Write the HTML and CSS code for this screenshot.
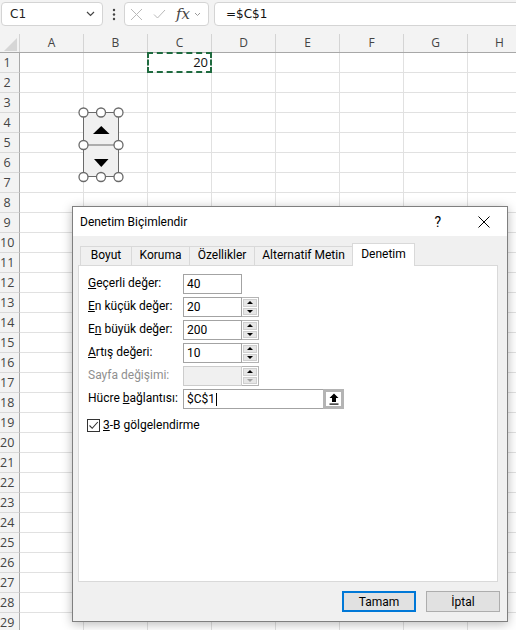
FILE: index.html
```html
<!DOCTYPE html>
<html lang="tr">
<head>
<meta charset="utf-8">
<title>Denetim Biçimlendir</title>
<link rel="stylesheet" href="styles.css">
</head>
<body>
<div class="app">
  <div class="fbar">
    <div class="namebox"><span>C1</span><svg width="9" height="6" viewBox="0 0 9 6"><path d="M1 1l3.5 3.5L8 1" fill="none" stroke="#444" stroke-width="1.2"/></svg></div>
    <div class="dots"><svg width="4" height="13" viewBox="0 0 4 13"><circle cx="2" cy="2" r="1.2" fill="#444"/><circle cx="2" cy="6.5" r="1.2" fill="#444"/><circle cx="2" cy="11" r="1.2" fill="#444"/></svg></div>
    <div class="fxbox">
      <svg width="13" height="13" viewBox="0 0 13 13"><path d="M1 1L12 12M12 1L1 12" stroke="#b9b9b9" stroke-width="1" fill="none"/></svg>
      <svg width="13" height="10" viewBox="0 0 13 10"><path d="M1 5.5L4.5 9L12 1" stroke="#b9b9b9" stroke-width="1" fill="none"/></svg>
      <span class="fx">fx</span>
      <svg width="7" height="5" viewBox="0 0 7 5"><path d="M1 1l2.5 2.5L6 1" fill="none" stroke="#9a9a9a" stroke-width="1"/></svg>
    </div>
    <div class="formula">=$C$1</div>
  </div>

  <div class="sheet">
    <div class="hdr">
      <div class="corner"><svg width="19" height="18" viewBox="0 0 19 18"><path d="M4 17H17V4Z" fill="#d6d6d6"/></svg></div>
      <div class="ch">A</div><div class="ch">B</div><div class="ch">C</div><div class="ch">D</div><div class="ch">E</div><div class="ch">F</div><div class="ch">G</div><div class="ch">H</div>
    </div>
    <div class="row"><div class="rh">1</div><div class="cell"></div><div class="cell"></div><div class="cell sel">20</div><div class="cell"></div><div class="cell"></div><div class="cell"></div><div class="cell"></div><div class="cell"></div></div>
    <div class="row"><div class="rh">2</div><div class="cells"></div></div>
    <div class="row"><div class="rh">3</div><div class="cells"></div></div>
    <div class="row"><div class="rh">4</div><div class="cells"></div></div>
    <div class="row"><div class="rh">5</div><div class="cells"></div></div>
    <div class="row"><div class="rh">6</div><div class="cells"></div></div>
    <div class="row"><div class="rh">7</div><div class="cells"></div></div>
    <div class="row"><div class="rh">8</div><div class="cells"></div></div>
    <div class="row"><div class="rh">9</div><div class="cells"></div></div>
    <div class="row"><div class="rh">10</div><div class="cells"></div></div>
    <div class="row"><div class="rh">11</div><div class="cells"></div></div>
    <div class="row"><div class="rh">12</div><div class="cells"></div></div>
    <div class="row"><div class="rh">13</div><div class="cells"></div></div>
    <div class="row"><div class="rh">14</div><div class="cells"></div></div>
    <div class="row"><div class="rh">15</div><div class="cells"></div></div>
    <div class="row"><div class="rh">16</div><div class="cells"></div></div>
    <div class="row"><div class="rh">17</div><div class="cells"></div></div>
    <div class="row"><div class="rh">18</div><div class="cells"></div></div>
    <div class="row"><div class="rh">19</div><div class="cells"></div></div>
    <div class="row"><div class="rh">20</div><div class="cells"></div></div>
    <div class="row"><div class="rh">21</div><div class="cells"></div></div>
    <div class="row"><div class="rh">22</div><div class="cells"></div></div>
    <div class="row"><div class="rh">23</div><div class="cells"></div></div>
    <div class="row"><div class="rh">24</div><div class="cells"></div></div>
    <div class="row"><div class="rh">25</div><div class="cells"></div></div>
    <div class="row"><div class="rh">26</div><div class="cells"></div></div>
    <div class="row"><div class="rh">27</div><div class="cells"></div></div>
    <div class="row"><div class="rh">28</div><div class="cells"></div></div>
    <div class="row"><div class="rh">29</div><div class="cells"></div></div>
  </div>

  <svg class="spinner" width="50" height="80" viewBox="0 0 50 80">
    <rect x="7.5" y="7.5" width="35" height="64" fill="#f0f0f0" stroke="#6a6a6a" stroke-width="1"/>
    <line x1="7.5" y1="40" x2="42.5" y2="40" stroke="#6a6a6a" stroke-width="1"/>
    <path d="M17 29H33.5L25.25 21Z" fill="#000"/>
    <path d="M18 54H32.5L25.25 62Z" fill="#000"/>
    <g fill="#fff" stroke="#6a6a6a" stroke-width="1.3">
      <circle cx="7.5" cy="7.5" r="4.5"/><circle cx="25" cy="7.5" r="4.5"/><circle cx="42.5" cy="7.5" r="4.5"/>
      <circle cx="7.5" cy="40" r="4.5"/><circle cx="42.5" cy="40" r="4.5"/>
      <circle cx="7.5" cy="72" r="4.5"/><circle cx="25" cy="72" r="4.5"/><circle cx="42.5" cy="72" r="4.5"/>
    </g>
  </svg>

  <div class="dialog">
    <div class="titlebar">
      <span class="title">Denetim Biçimlendir</span>
      <span class="help">?</span>
      <svg class="close" width="12" height="12" viewBox="0 0 12 12"><path d="M0.5 0.5L11.5 11.5M11.5 0.5L0.5 11.5" stroke="#000" stroke-width="1" fill="none"/></svg>
    </div>
    <div class="dbody">
      <div class="tabs">
        <div class="tab">Boyut</div>
        <div class="tab">Koruma</div>
        <div class="tab">Özellikler</div>
        <div class="tab">Alternatif Metin</div>
        <div class="tab active">Denetim</div>
      </div>
      <div class="panel">
        <div class="frow">
          <label class="lbl"><u>G</u>eçerli değer:</label>
          <div class="inp">40</div>
        </div>
        <div class="frow">
          <label class="lbl"><u>E</u>n küçük değer:</label>
          <div class="inp">20</div>
          <div class="spin"><div class="sb"><i class="up"></i></div><div class="sb"><i class="dn"></i></div></div>
        </div>
        <div class="frow">
          <label class="lbl">E<u>n</u> büyük değer:</label>
          <div class="inp">200</div>
          <div class="spin"><div class="sb"><i class="up"></i></div><div class="sb"><i class="dn"></i></div></div>
        </div>
        <div class="frow">
          <label class="lbl"><u>A</u>rtış değeri:</label>
          <div class="inp">10</div>
          <div class="spin"><div class="sb"><i class="up"></i></div><div class="sb"><i class="dn"></i></div></div>
        </div>
        <div class="frow">
          <label class="lbl dis">Sayfa değişimi:</label>
          <div class="inp disinp"></div>
          <div class="spin"><div class="sb"><i class="up"></i></div><div class="sb"><i class="dn disarr"></i></div></div>
        </div>
        <div class="frow">
          <label class="lbl">Hücre <u>b</u>ağlantısı:</label>
          <div class="inp wide"><span>$C$1</span><span class="caret"></span><span class="grow"></span>
            <span class="refbtn"><svg width="10" height="12" viewBox="0 0 10 12"><path d="M5 0.5L0.5 5H3V9H7V5H9.5Z" fill="#000"/><rect x="0.5" y="10.5" width="9" height="1.2" fill="#000"/></svg></span>
          </div>
        </div>
        <div class="chkrow">
          <span class="chk"><svg width="11" height="11" viewBox="0 0 11 11"><path d="M1.5 5.5L4.2 8.3L9.8 2" stroke="#333" stroke-width="1.1" fill="none"/></svg></span>
          <span><u>3</u>-B gölgelendirme</span>
        </div>
      </div>
      <div class="footer">
        <button class="btn primary">Tamam</button>
        <button class="btn">İptal</button>
      </div>
    </div>
  </div>
</div>
</body>
</html>
```
FILE: styles.css
```css
* { box-sizing: border-box; margin: 0; padding: 0; }
body { margin: 0; width: 516px; height: 630px; overflow: hidden; background: #fff; }
.app { position: relative; width: 516px; height: 630px; overflow: hidden; background: #f3f3f3; }

/* formula bar */
.fbar { display: flex; align-items: center; height: 28px; padding: 2px 0 2px 1px; font-family: "DejaVu Sans", sans-serif; font-size: 12px; color: #222; }
.namebox { width: 102px; height: 24px; background: #fff; border: 1px solid #d4d4d4; border-radius: 4px; display: flex; align-items: center; justify-content: space-between; padding: 0 7px 0 8px; }
.dots { width: 21px; display: flex; justify-content: center; }
.fxbox { width: 85px; height: 24px; background: #fff; border: 1px solid #d4d4d4; border-radius: 4px; display: flex; align-items: center; padding: 0 5px 0 5px; gap: 9px; }
.fxbox svg:nth-child(2) { margin-left: 1px; }
.fx { font-family: "DejaVu Serif", serif; font-style: italic; font-size: 15px; color: #444; margin-left: 1px; margin-right: -5px; }
.formula { flex: 1; height: 24px; margin-left: 5px; margin-right: -10px; background: #fff; border: 1px solid #d4d4d4; border-radius: 4px; display: flex; align-items: center; padding-left: 11px; color: #111; }

/* sheet */
.sheet { padding-top: 6px; font-family: "Open Sans", sans-serif; }
.hdr { display: flex; height: 18px; border-bottom: 1px solid #a8a8a8; box-sizing: content-box; }
.corner { width: 20px; flex: none; height: 18px; border-right: 1px solid #d4d4d4; }
.corner svg { display: block; }
.ch { width: 64px; flex: none; height: 18px; border-right: 1px solid #d4d4d4; text-align: center; font-size: 12px; line-height: 18px; color: #444; }
.row { display: flex; height: 20px; }
.rh { width: 20px; flex: none; border-right: 1px solid #a8a8a8; border-bottom: 1px solid #d9d9d9; font-size: 12.5px; line-height: 19px; color: #444; text-align: center; padding-right: 5px; white-space: nowrap; }
.cell { width: 64px; flex: none; background: #fff; border-right: 1px solid #e1e1e1; border-bottom: 1px solid #e1e1e1; }
.cells { flex: 1; background: repeating-linear-gradient(to right, #fff 0 63px, #e1e1e1 63px 64px); border-bottom: 1px solid #e1e1e1; }
.sel { position: relative; text-align: right; padding-right: 3px; font-size: 13px; line-height: 19px; color: #111; }
.sel::after { content: ""; position: absolute; top: -1px; left: -1px; right: -1px; bottom: -1px; border: 2px dashed #1f6b3f; }

/* floating spin control */
.spinner { position: absolute; left: 76px; top: 105px; }

/* dialog */
.dialog { position: absolute; left: 72px; top: 206px; width: 436px; height: 416px; background: #f0f0f0; border: 1px solid #7f7f7f; box-shadow: 0 2px 10px rgba(0,0,0,0.28); font-family: Roboto, "Liberation Sans", sans-serif; font-size: 12px; color: #000; display: flex; flex-direction: column; }
.titlebar { height: 29px; background: #fff; display: flex; align-items: center; padding: 0 17px 0 7px; }
.title { flex: 1; font-size: 12px; }
.help { font-size: 14px; margin-right: 37px; }
.close { display: block; }
.dbody { flex: 1; padding: 7px 9px 0 5px; display: flex; flex-direction: column; }
.tabs { display: flex; align-items: flex-end; height: 22px; padding-left: 2px; }
.tab { height: 19px; line-height: 17px; border: 1px solid #d9d9d9; border-bottom: none; margin-right: -1px; text-align: center; background: #f0f0f0; }
.tab:nth-child(1) { width: 52px; }
.tab:nth-child(2) { width: 59px; }
.tab:nth-child(3) { width: 66px; }
.tab:nth-child(4) { width: 99px; }
.tab.active { width: 63px; height: 23px; margin-bottom: -1px; background: #fff; position: relative; z-index: 1; line-height: 20px; }
.panel { height: 317px; background: #fff; border: 1px solid #d9d9d9; padding: 8px 9px 0 9px; }
.frow { display: flex; align-items: center; height: 20px; margin-bottom: 3px; }
.lbl { width: 95px; flex: none; padding-bottom: 3px; white-space: nowrap; }
.lbl.dis { color: #8f8f8f; }
.inp { width: 59px; height: 20px; border: 1px solid #a3a3a3; background: #fff; padding-left: 3px; line-height: 18px; display: flex; align-items: center; }
.disinp { background: #f0f0f0; border-color: #cccccc; }
.spin { width: 17px; height: 20px; border: 1px solid #b4b4b4; border-left: none; padding: 1px; display: flex; flex-direction: column; gap: 1px; }
.sb { flex: 1; background: #e6e6e6; border: 1px solid #cfcfcf; display: flex; align-items: center; justify-content: center; }
.up { width: 0; height: 0; border-left: 3px solid transparent; border-right: 3px solid transparent; border-bottom: 3px solid #000; }
.dn { width: 0; height: 0; border-left: 3px solid transparent; border-right: 3px solid transparent; border-top: 3px solid #000; }
.dn.disarr { border-top-color: #a0a0a0; }
.inp.wide { width: 161px; padding-right: 0; }
.caret { width: 1px; height: 13px; background: #000; margin-left: 1px; }
.grow { flex: 1; }
.refbtn { width: 21px; height: 20px; margin: -1px -1px -1px 0; border: 3px solid #b4b4b4; background: #fff; display: flex; align-items: center; justify-content: center; }
.chkrow { display: flex; align-items: center; gap: 3px; margin-top: 9px; margin-left: -1px; }
.chk { width: 13px; height: 13px; border: 1px solid #333; background: #fff; display: flex; align-items: center; justify-content: center; }
.footer { display: flex; justify-content: flex-end; gap: 10px; margin-top: 9px; padding-right: 7px; margin-right: -9px; }
.btn { width: 74px; height: 21px; background: #e1e1e1; border: 1px solid #adadad; font-family: Roboto, "Liberation Sans", sans-serif; font-size: 12px; color: #000; }
.btn.primary { border: 2px solid #0078d7; }
```
